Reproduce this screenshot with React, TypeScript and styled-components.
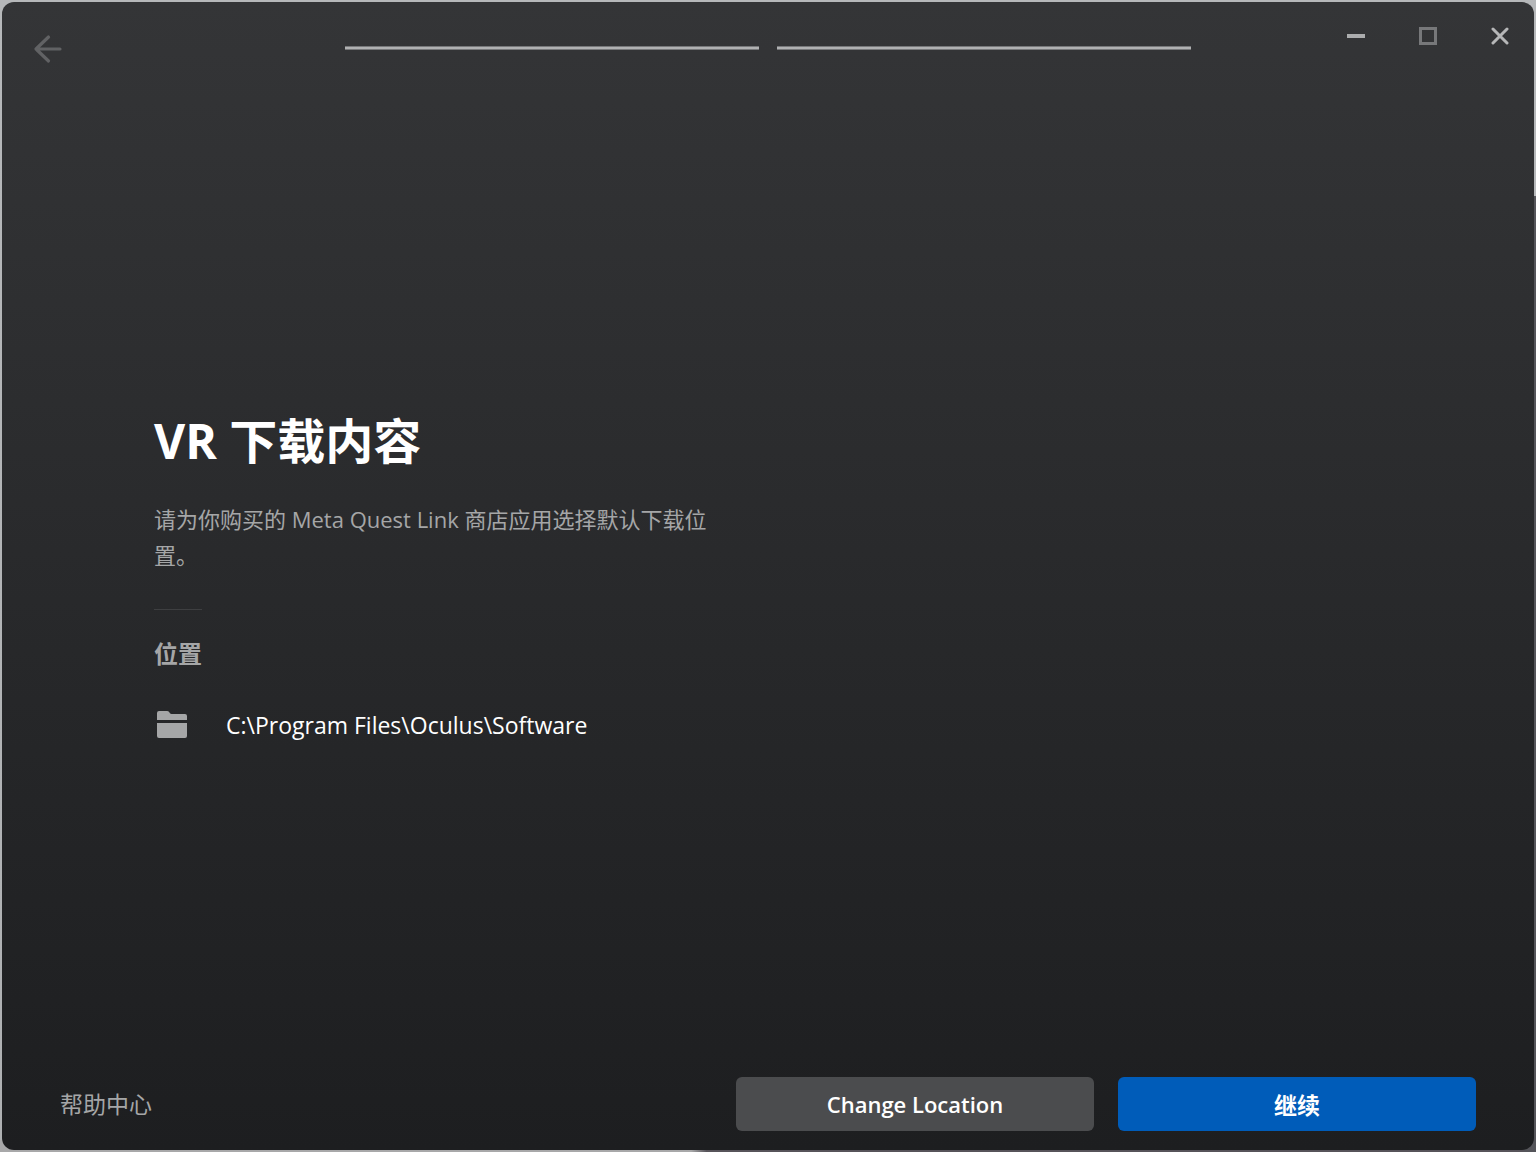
import React from "react";
import styled, { createGlobalStyle } from "styled-components";

const GlobalStyle = createGlobalStyle`
  *, *::before, *::after { box-sizing: border-box; }
  body {
    margin: 0;
    font-family: "Open Sans", "Noto Sans CJK SC", sans-serif;
    color: #fff;
  }
`;

const Desktop = styled.div`
  display: flex;
  min-height: 100vh;
  padding: 2px;
  background:
    linear-gradient(#b6b8ba 17%, #55555a 17%) right / 12px 100% no-repeat,
    linear-gradient(90deg, #a8a8a9 45%, #57545a 46%) bottom / 100% 12px no-repeat,
    linear-gradient(#b6b8ba, #aeb0b2);
`;

const Window = styled.div`
  flex: 1;
  display: flex;
  flex-direction: column;
  border-radius: 12px;
  background: linear-gradient(#343537, #1d1e20);
`;

const TitleBar = styled.header`
  display: grid;
  grid-template-columns: 1fr minmax(0, 846px) 1fr;
  align-items: start;
  height: 92px;
`;

const IconButton = styled.button<{ $tone: string }>`
  display: flex;
  align-items: center;
  justify-content: center;
  width: 68px;
  height: 68px;
  padding: 0;
  border: 0;
  background: none;
  color: ${(p) => p.$tone};
  cursor: pointer;
`;

const BackButton = styled(IconButton)`
  width: 92px;
  height: 94px;
`;

const Steps = styled.div`
  display: flex;
  gap: 18px;
  padding-top: 44px;
`;

const Step = styled.div`
  flex: 1;
  height: 4px;
  border: solid #77787a;
  border-width: 1px 0;
  background: #b0b1b2;
`;

const Controls = styled.div`
  display: flex;
  justify-content: flex-end;
  gap: 4px;
`;

const Main = styled.main`
  flex: 1;
  display: flex;
  flex-direction: column;
  justify-content: center;
  padding: 0 152px;
`;

const Title = styled.h1`
  margin: 0;
  font-size: 48px;
  line-height: 64px;
  font-weight: 700;
`;

const Description = styled.p`
  max-width: 576px;
  margin: 28px 0 0;
  font-size: 22px;
  line-height: 36px;
  color: #a5a6a7;
`;

const Divider = styled.hr`
  width: 48px;
  height: 1px;
  margin: 36px 0 28px;
  border: 0;
  background: #3e3f41;
`;

const SectionTitle = styled.h2`
  margin: 0;
  font-size: 24px;
  line-height: 32px;
  font-weight: 700;
  color: #a5a6a7;
`;

const LocationRow = styled.div`
  display: flex;
  align-items: center;
  gap: 36px;
  margin-top: 36px;
  font-size: 23px;
  line-height: 38px;
`;

const Footer = styled.footer`
  display: flex;
  align-items: center;
  justify-content: space-between;
  height: 92px;
  padding: 0 58px;
`;

const HelpLink = styled.a`
  font-size: 23px;
  line-height: 32px;
  color: #a5a6a7;
  text-decoration: none;
`;

const Actions = styled.div`
  display: flex;
  gap: 24px;
`;

const ActionButton = styled.button<{ $primary?: boolean }>`
  width: 358px;
  height: 54px;
  padding: 0;
  border: 0;
  border-radius: 6px;
  background: ${(p) => (p.$primary ? "#005cb9" : "#4b4c4e")};
  color: #fff;
  font-family: inherit;
  font-size: ${(p) => (p.$primary ? 23 : 22)}px;
  font-weight: ${(p) => (p.$primary ? 700 : 600)};
  cursor: pointer;
`;

export default function App() {
  return (
    <>
      <GlobalStyle />
      <Desktop>
        <Window>
          <TitleBar>
            <BackButton type="button" aria-label="返回" $tone="#616264">
              <svg width="32" height="32" viewBox="0 0 32 32" fill="none" stroke="currentColor" strokeWidth="3.200" strokeLinecap="round" strokeLinejoin="round">
                <path d="M28 16H4M16.500 4L4 16L16.500 28" />
              </svg>
            </BackButton>
            <Steps>
              <Step />
              <Step />
            </Steps>
            <Controls>
              <IconButton type="button" aria-label="最小化" $tone="#acadae">
                <svg width="18" height="18" viewBox="0 0 18 18" fill="currentColor">
                  <path d="M0 7H18V11H0Z" />
                </svg>
              </IconButton>
              <IconButton type="button" aria-label="最大化" $tone="#77787a">
                <svg width="18" height="18" viewBox="0 0 18 18" fill="none" stroke="currentColor" strokeWidth="3">
                  <path d="M1.500 1.500H16.500V16.500H1.500Z" />
                </svg>
              </IconButton>
              <IconButton type="button" aria-label="关闭" $tone="#b6b7b8">
                <svg width="18" height="18" viewBox="0 0 18 18" fill="none" stroke="currentColor" strokeWidth="3" strokeLinecap="round">
                  <path d="M2 2L16 16M16 2L2 16" />
                </svg>
              </IconButton>
            </Controls>
          </TitleBar>
          <Main>
            <Title>VR 下载内容</Title>
            <Description>请为你购买的 Meta Quest Link 商店应用选择默认下载位置。</Description>
            <Divider />
            <SectionTitle>位置</SectionTitle>
            <LocationRow>
              <svg width="36" height="36" viewBox="0 0 36 36" fill="#a5a6a7" aria-hidden="true">
                <path d="M3 13V6Q3 4 5 4H13Q14.500 4 15.300 5.200L16 6.200Q16.500 7 17.500 7H31Q33 7 33 9V13Z" />
                <path d="M3 16H33V29Q33 31 31 31H5Q3 31 3 29Z" />
              </svg>
              <span>C:\Program Files\Oculus\Software</span>
            </LocationRow>
          </Main>
          <Footer>
            <HelpLink href="#help">帮助中心</HelpLink>
            <Actions>
              <ActionButton type="button">Change Location</ActionButton>
              <ActionButton type="button" $primary>继续</ActionButton>
            </Actions>
          </Footer>
        </Window>
      </Desktop>
    </>
  );
}
